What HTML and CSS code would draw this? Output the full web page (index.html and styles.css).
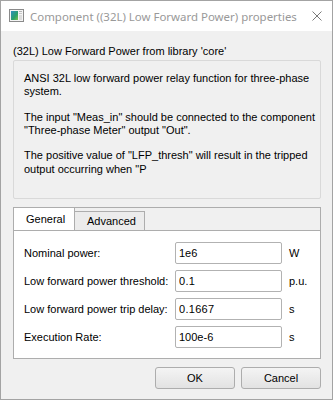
FILE: index.html
```html
<!DOCTYPE html>
<html lang="en">
<head>
  <meta charset="UTF-8" />
  <title>Component properties</title>
  <link rel="stylesheet" href="styles.css">
</head>
<body>
  <div class="window">

    <!-- ======= TITLE BAR ======= -->
    <div class="titlebar">
      <svg class="app-icon" width="15" height="13" viewBox="0 0 15 13">
        <defs>
          <linearGradient id="ig" x1="0" y1="0" x2="1" y2="1">
            <stop offset="0" stop-color="#2f8fc0"/>
            <stop offset="0.6" stop-color="#2aa06a"/>
            <stop offset="1" stop-color="#7cc24a"/>
          </linearGradient>
        </defs>
        <rect x="0.5" y="0.5" width="14" height="12" fill="#f4f4f4" stroke="#8a8a8a"/>
        <rect x="2" y="2" width="7" height="9" fill="url(#ig)"/>
        <rect x="10" y="2" width="3" height="1" fill="#b5b5b5"/>
        <rect x="10" y="4" width="3" height="1" fill="#c8c8c8"/>
        <rect x="10" y="6" width="3" height="5" fill="#dcdcdc"/>
      </svg>
      <span class="title">Component ((32L) Low Forward Power) properties</span>
      <svg class="close" width="10" height="10" viewBox="0 0 10 10">
        <path d="M0.5 0.5 L9.5 9.5 M9.5 0.5 L0.5 9.5" stroke="#7a7a7a" stroke-width="1" fill="none"/>
      </svg>
    </div>

    <!-- ======= CONTENT ======= -->
    <div class="content">
      <div class="heading">(32L) Low Forward Power from library 'core'</div>

      <div class="desc">
        <p>ANSI 32L low forward power relay function for three-phase system.</p>
        <p>The input "Meas_in" should be connected to the component "Three-phase Meter" output "Out".</p>
        <p>The positive value of "LFP_thresh" will result in the tripped output occurring when "P</p>
      </div>

      <div class="tabs">
        <div class="tab-bar">
          <div class="tab active">General</div>
          <div class="tab">Advanced</div>
        </div>
        <div class="tab-pane">
          <div class="form">
            <label>Nominal power:</label>
            <input type="text" value="1e6">
            <span class="unit">W</span>

            <label>Low forward power threshold:</label>
            <input type="text" value="0.1" class="spaced">
            <span class="unit">p.u.</span>

            <label>Low forward power trip delay:</label>
            <input type="text" value="0.1667" class="spaced">
            <span class="unit">s</span>

            <label>Execution Rate:</label>
            <input type="text" value="100e-6">
            <span class="unit">s</span>
          </div>
        </div>
      </div>

      <div class="buttons">
        <button>OK</button>
        <button>Cancel</button>
      </div>
    </div>
  </div>
</body>
</html>
```

FILE: styles.css
```css
body {
  margin: 0;
  padding: 0;
  background: #fff;
  font-family: 'Liberation Sans', Arial, sans-serif;
  font-size: 11px;
  color: #000;
}

.window {
  width: 333px;
  height: 400px;
  box-sizing: border-box;
  border: 1px solid #a3a3a3;
  background: #f0f0f0;
  display: flex;
  flex-direction: column;
}

/* ===== TITLE BAR ===== */
.titlebar {
  height: 30px;
  background: #fff;
  display: flex;
  align-items: center;
  padding: 0 10px 0 8px;
}

.app-icon {
  margin-top: -1px;
  flex: none;
}

.title {
  margin-left: 6px;
  flex: 1;
  font-family: 'Noto Sans', sans-serif;
  font-size: 11.45px;
  color: #999;
  white-space: nowrap;
}

.close {
  flex: none;
}

/* ===== CONTENT ===== */
.content {
  padding: 0 11px 0 12px;
  display: flex;
  flex-direction: column;
}

.heading {
  margin-top: 13px;
  height: 14px;
  line-height: 14px;
}

.desc {
  margin-top: 2px;
  height: 139px;
  box-sizing: border-box;
  border: 1px solid #d9d9d9;
  border-radius: 2px;
  padding: 11px 2px 0 10px;
  line-height: 13.33px;
  overflow: hidden;
}

.desc p {
  margin: 0 0 12px 0;
}

/* ===== TABS ===== */
.tabs {
  margin-top: 8px;
  height: 152px;
  box-sizing: border-box;
  border: 1px solid #adadad;
  display: flex;
  flex-direction: column;
}

.tab-bar {
  display: flex;
  align-items: flex-end;
  height: 22px;
}

.tab {
  height: 19px;
  line-height: 19px;
  box-sizing: border-box;
  border: 1px solid #adadad;
  border-bottom: none;
  background: #ececec;
  padding: 0 12px;
  width: 71px;
  text-align: center;
}

.tab.active {
  height: 22px;
  line-height: 23px;
  width: 61px;
  background: #fff;
  border-left: none;
  border-top: none;
  border-right: 1px solid #adadad;
  margin-right: -1px;
  position: relative;
  z-index: 1;
}

.tab-pane {
  flex: 1;
  background: #fff;
  border-top: 1px solid #adadad;
  padding: 11px 0 0 10px;
}

.form {
  display: grid;
  grid-template-columns: 144px 107px auto;
  column-gap: 7px;
  row-gap: 6px;
  align-items: center;
}

.form label {
  white-space: nowrap;
}

.form input {
  height: 22px;
  box-sizing: border-box;
  border: 1px solid #b2b2b2;
  border-radius: 2px;
  padding: 0 3px;
  font-family: 'Liberation Sans', Arial, sans-serif;
  font-size: 11px;
  outline: none;
}

.form input.spaced {
  letter-spacing: 0.3px;
}

/* ===== BUTTONS ===== */
.buttons {
  margin-top: 8px;
  display: flex;
  justify-content: flex-end;
  gap: 6px;
}

.buttons button {
  width: 80px;
  height: 22px;
  border: 1px solid #adadad;
  border-radius: 3px;
  background: linear-gradient(#f4f4f4, #e2e2e2);
  font-family: 'Liberation Sans', Arial, sans-serif;
  font-size: 11px;
  padding: 0;
}
```
